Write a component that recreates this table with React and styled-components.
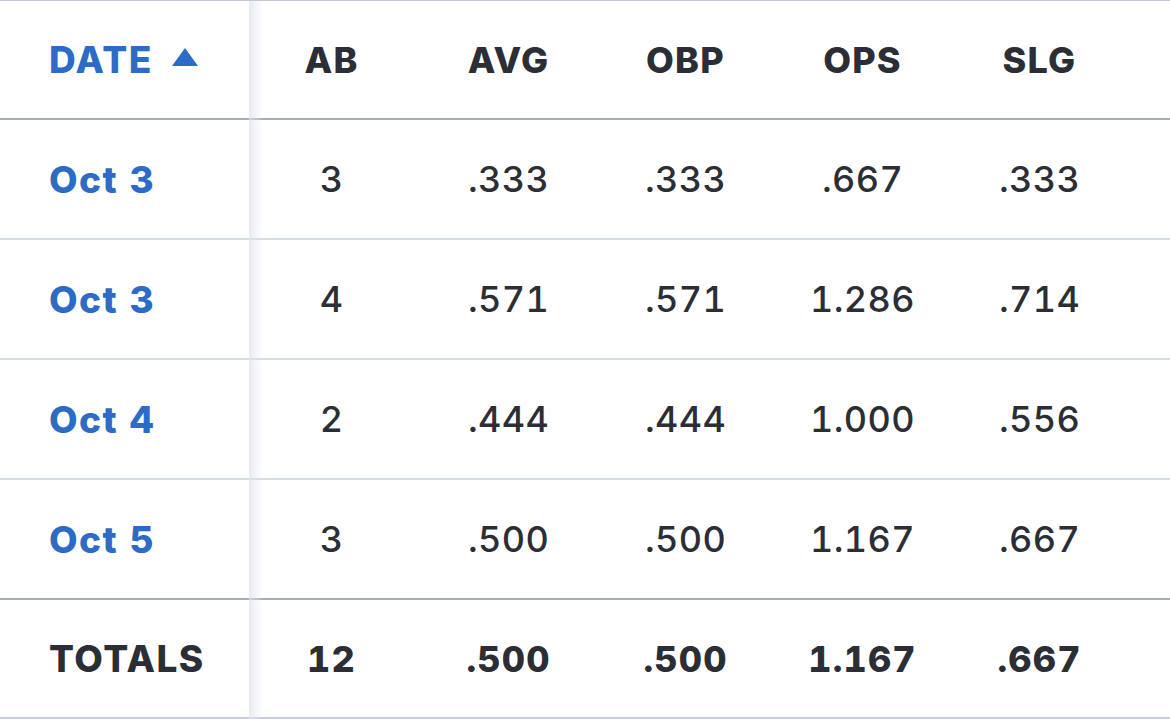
import React from 'react';
import styled, { createGlobalStyle } from 'styled-components';

const GlobalStyle = createGlobalStyle`
  * {
    margin: 0;
    padding: 0;
    box-sizing: border-box;
  }
  body, html {
    overflow: hidden;
    width: 100vw;
    height: 100vh;
    background: #ffffff;
    font-family: Inter, "Liberation Sans", sans-serif;
  }
`;

// Tabla con una columna fija a la izquierda y cinco de estadísticas
const Table = styled.div`
  display: grid;
  grid-template-columns: 249px repeat(5, 177px) 1fr;
  border-top: 1px solid #c3c7cf;
  width: 100%;
`;

const Row = styled.div`
  display: contents;
`;

const Cell = styled.div`
  height: ${(p) => p.$height || 120}px;
  display: flex;
  align-items: center;
  justify-content: center;
  padding-right: 12px;
  font-size: 36px;
  letter-spacing: ${(p) => (p.$bold ? '1.2px' : '0.4px')};
  color: #2c2e36;
  font-weight: ${(p) => (p.$bold ? 800 : 500)};
  border-bottom: ${(p) => p.$line || '2px solid #d6dde7'};
  font-variant-numeric: tabular-nums;
`;

// Primera columna (fecha) con sombra a la derecha
const FirstCell = styled(Cell)`
  justify-content: flex-start;
  padding: 0 0 0 49px;
  position: relative;
  color: ${(p) => (p.$blue ? '#2c6cc6' : '#2c2e36')};
  font-size: 37px;
  font-weight: 800;
  letter-spacing: 1.5px;
  &::after {
    content: '';
    position: absolute;
    top: 0;
    bottom: -2px;
    right: -14px;
    width: 14px;
    background: linear-gradient(to right, rgba(222, 228, 238, 0.75), rgba(255, 255, 255, 0));
    pointer-events: none;
    z-index: 1;
  }
`;

const Filler = styled.div`
  border-bottom: ${(p) => p.$line || '2px solid #d6dde7'};
`;

const SortArrow = styled.span`
  display: inline-block;
  width: 0;
  height: 0;
  margin-left: 19px;
  margin-top: -6px;
  border-left: 13px solid transparent;
  border-right: 13px solid transparent;
  border-bottom: 18px solid #2c6cc6;
`;

const heavy = '2px solid #a5adbc';

const rows = [
  ['Oct 3', '3', '.333', '.333', '.667', '.333'],
  ['Oct 3', '4', '.571', '.571', '1.286', '.714'],
  ['Oct 4', '2', '.444', '.444', '1.000', '.556'],
  ['Oct 5', '3', '.500', '.500', '1.167', '.667'],
];

const totals = ['TOTALS', '12', '.500', '.500', '1.167', '.667'];

function App() {
  return (
    <>
      <GlobalStyle />
      <Table>
        <Row>
          <FirstCell $blue $height={119} $line={heavy}>
            DATE
            <SortArrow />
          </FirstCell>
          {['AB', 'AVG', 'OBP', 'OPS', 'SLG'].map((h) => (
            <Cell key={h} $bold $height={119} $line={heavy}>
              {h}
            </Cell>
          ))}
          <Filler $line={heavy} />
        </Row>
        {rows.map((r, i) => (
          <Row key={i}>
            <FirstCell $blue $line={i === rows.length - 1 ? heavy : undefined}>
              {r[0]}
            </FirstCell>
            {r.slice(1).map((v, j) => (
              <Cell key={j} $line={i === rows.length - 1 ? heavy : undefined}>
                {v}
              </Cell>
            ))}
            <Filler $line={i === rows.length - 1 ? heavy : undefined} />
          </Row>
        ))}
        <Row>
          <FirstCell $height={119} $line="2px solid #c4cde0">
            {totals[0]}
          </FirstCell>
          {totals.slice(1).map((v, j) => (
            <Cell key={j} $bold $height={119} $line="2px solid #c4cde0">
              {v}
            </Cell>
          ))}
          <Filler $line="2px solid #c4cde0" />
        </Row>
      </Table>
    </>
  );
}

export default App;
